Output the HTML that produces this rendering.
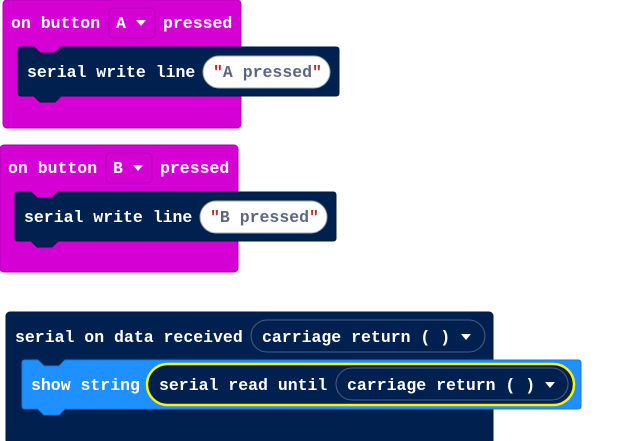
<!DOCTYPE html>
<html><head><meta charset="utf-8"><style>
html,body{margin:0;padding:0;background:#fff;width:633px;height:441px;overflow:hidden}
text{font-family:"Liberation Mono",monospace;font-weight:bold;font-size:16.5px}
</style></head><body>
<svg width="633" height="441" viewBox="0 0 633 441" xmlns="http://www.w3.org/2000/svg">
<defs>
<symbol id="tri" viewBox="0 0 10 6"><path d="M0 0H10L5 6Z" fill="#fff"/></symbol>
</defs>
<!-- Block A -->
<g>
<rect x="3" y="0" width="238" height="128" rx="4" fill="#d400d4" stroke="#b000b0" stroke-width="1"/>
<rect x="109" y="8" width="46" height="30" rx="4" fill="#d400d4" stroke="#b000b0" stroke-width="1"/>
<text x="11" y="28" fill="#fff">on button</text>
<text x="116" y="28" fill="#fff">A</text>
<path d="M136 20H146L141 26Z" fill="#fff"/>
<text x="163" y="28" fill="#fff">pressed</text>
<path d="M18 50Q18 47 21 47H34L40 53H55L61 47H336Q339 47 339 50V93Q339 96 336 96H61L55 102H40L34 96H21Q18 96 18 93Z" fill="#00204f" stroke="#001a40" stroke-width="1" stroke-linejoin="round"/>
<text x="27" y="77" fill="#fff">serial write line</text>
<rect x="203" y="56" width="127" height="32" rx="16" fill="#fff" stroke="#9aa" stroke-width="1"/>
<text x="213" y="77" fill="#5c6680"><tspan fill="#b03030">"</tspan>A pressed<tspan fill="#b03030">"</tspan></text>
</g>
<!-- Block B -->
<g transform="translate(-3,145)">
<rect x="3" y="0" width="238" height="127" rx="4" fill="#d400d4" stroke="#b000b0" stroke-width="1"/>
<rect x="109" y="8" width="46" height="30" rx="4" fill="#d400d4" stroke="#b000b0" stroke-width="1"/>
<text x="11" y="28" fill="#fff">on button</text>
<text x="116" y="28" fill="#fff">B</text>
<path d="M136 20H146L141 26Z" fill="#fff"/>
<text x="163" y="28" fill="#fff">pressed</text>
<path d="M18 50Q18 47 21 47H34L40 53H55L61 47H336Q339 47 339 50V93Q339 96 336 96H61L55 102H40L34 96H21Q18 96 18 93Z" fill="#00204f" stroke="#001a40" stroke-width="1" stroke-linejoin="round"/>
<text x="27" y="77" fill="#fff">serial write line</text>
<rect x="203" y="56" width="127" height="32" rx="16" fill="#fff" stroke="#9aa" stroke-width="1"/>
<text x="213" y="77" fill="#5c6680"><tspan fill="#b03030">"</tspan>B pressed<tspan fill="#b03030">"</tspan></text>
</g>
<!-- Block 3 -->
<rect x="6" y="312" width="487" height="132" rx="4" fill="#00204f" stroke="#001a40"/>
<text x="15" y="342" fill="#fff">serial on data received</text>
<rect x="251" y="320" width="234" height="32" rx="16" fill="#00204f" stroke="#4a5f85" stroke-width="1"/>
<text x="262" y="342" fill="#fff">carriage return ( )</text>
<path d="M461 334H471L466 340Z" fill="#fff"/>
<path d="M22 363Q22 360 25 360H38L44 366H59L65 360H578Q581 360 581 363V406Q581 409 578 409H65L59 415H44L38 409H25Q22 409 22 406Z" fill="#1e90ff" stroke="#1a7ad8" stroke-width="1" stroke-linejoin="round"/>
<text x="31" y="390" fill="#fff">show string</text>
<rect x="147" y="364" width="427" height="41" rx="20.5" fill="#00204f" stroke="#fff200" stroke-width="2.5"/>
<text x="159" y="390" fill="#fff">serial read until</text>
<rect x="336" y="368" width="232" height="32" rx="16" fill="#00204f" stroke="#4a5f85" stroke-width="1"/>
<text x="347" y="390" fill="#fff">carriage return ( )</text>
<path d="M545 382H555L550 388Z" fill="#fff"/>
</svg>
</body></html>
